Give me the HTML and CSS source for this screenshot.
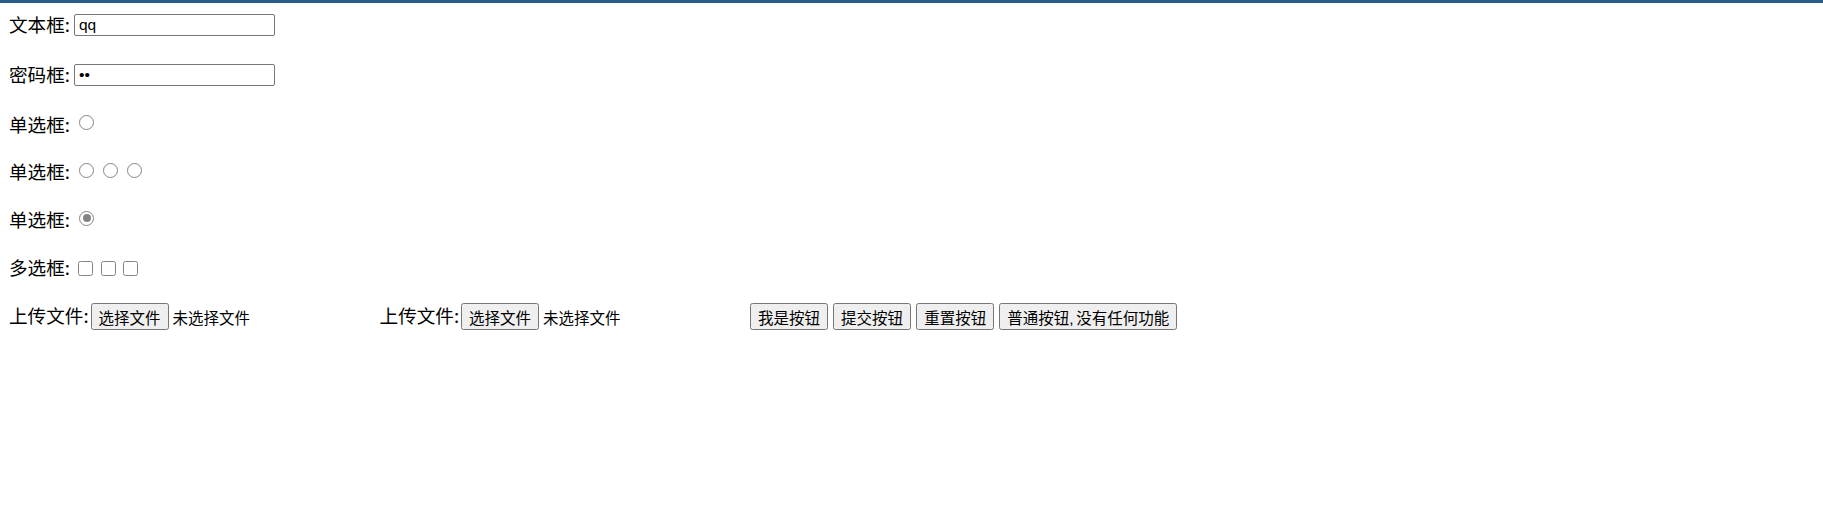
FILE: index.html
```html
<!DOCTYPE html>
<html lang="zh-CN">
<head>
<meta charset="utf-8">
<title>表单</title>
<link rel="stylesheet" href="styles.css">
</head>
<body>
<div class="topbar"></div>
<form class="page">
  <div class="row tall">
    <span class="lbl">文本框:</span>
    <input class="text-input" type="text" value="qq">
  </div>
  <div class="row tall">
    <span class="lbl">密码框:</span>
    <input class="text-input" type="password" value="qq">
  </div>
  <div class="row">
    <span class="lbl">单选框:</span>
    <span class="radio"></span>
  </div>
  <div class="row">
    <span class="lbl">单选框:</span>
    <span class="radio"></span><span class="radio"></span><span class="radio"></span>
  </div>
  <div class="row">
    <span class="lbl">单选框:</span>
    <span class="radio checked"></span>
  </div>
  <div class="row">
    <span class="lbl">多选框:</span>
    <span class="checkbox"></span><span class="checkbox"></span><span class="checkbox"></span>
  </div>
  <div class="row last">
    <span class="lbl tight">上传文件:</span>
    <span class="file"><span class="btn">选择文件</span><span class="file-text">未选择文件</span></span>
    <span class="lbl tight">上传文件:</span>
    <span class="file"><span class="btn">选择文件</span><span class="file-text">未选择文件</span></span>
    <span class="btn push">我是按钮</span>
    <span class="btn push">提交按钮</span>
    <span class="btn push">重置按钮</span>
    <span class="btn push narrow-space">普通按钮, 没有任何功能</span>
  </div>
</form>
</body>
</html>
```

FILE: styles.css
```css
html, body {
  margin: 0;
  padding: 0;
  background: #ffffff;
}

body {
  font-family: "Noto Sans CJK SC", "Liberation Sans", sans-serif;
  font-size: 18.6px;
  color: #000000;
}

.topbar {
  height: 3px;
  background: #2b5b88;
}

.page {
  display: flex;
  flex-direction: column;
  padding: 8.5px 0 0 9px;
}

.row {
  display: flex;
  align-items: center;
  height: 24px;
  margin-bottom: 23.7px;
}

.row.tall {
  margin-bottom: 26.1px;
}

.lbl {
  line-height: 24px;
  margin-right: 4px;
  white-space: nowrap;
}

.lbl.tight {
  margin-right: 2px;
}

.text-input {
  box-sizing: border-box;
  width: 201px;
  height: 22px;
  margin: 2px 0 0 0;
  padding: 0 4px;
  border: 1px solid #767676;
  border-radius: 2px;
  font-family: "Liberation Sans", "Noto Sans CJK SC", sans-serif;
  font-size: 15.5px;
  color: #000000;
  background: #ffffff;
  outline: none;
}

.radio {
  box-sizing: border-box;
  width: 15px;
  height: 15px;
  margin: 0 3.5px 0 5.3px;
  border: 1px solid #858585;
  border-radius: 50%;
  background: #ffffff;
  display: flex;
  align-items: center;
  justify-content: center;
  position: relative;
  top: -1px;
}

.radio.checked::after {
  content: "";
  width: 8px;
  height: 8px;
  border-radius: 50%;
  background: #848484;
}

.checkbox {
  box-sizing: border-box;
  width: 15px;
  height: 15px;
  margin: 0 3.3px 0 4.3px;
  border: 1px solid #858585;
  border-radius: 2.5px;
  background: #ffffff;
  position: relative;
  top: 1.5px;
}

.row.last {
  height: 27px;
  margin-top: -1px;
}

.file {
  display: flex;
  align-items: center;
  width: 284px;
  margin-right: 5px;
  position: relative;
  top: 2px;
}

.btn {
  box-sizing: border-box;
  display: inline-flex;
  align-items: center;
  justify-content: center;
  height: 27px;
  padding: 0 7px;
  border: 1px solid #767676;
  border-radius: 2.5px;
  background: #efefef;
  font-family: "Liberation Sans", "Noto Sans CJK SC", sans-serif;
  font-size: 15.5px;
  color: #000000;
  white-space: nowrap;
}

.file .btn {
  width: 78px;
}

.file-text {
  margin-left: 4px;
  font-family: "Liberation Sans", "Noto Sans CJK SC", sans-serif;
  font-size: 15.5px;
  white-space: nowrap;
}

.btn.push {
  margin-right: 5px;
  position: relative;
  top: 2px;
}

.btn.narrow-space {
  word-spacing: -1.5px;
}
```
